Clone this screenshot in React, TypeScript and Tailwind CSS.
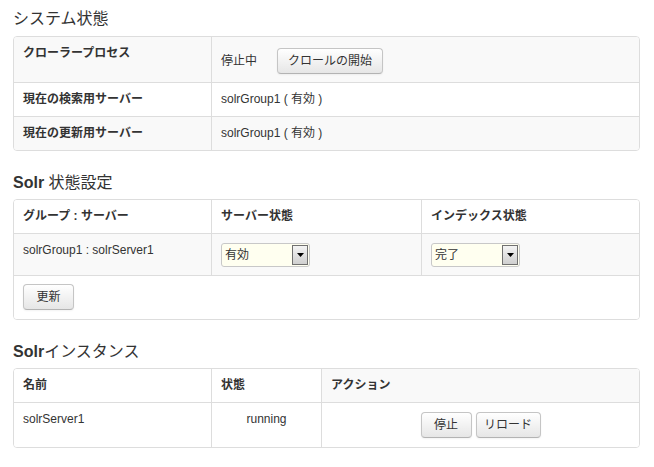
import React from "react";

const font = { fontFamily: '"Liberation Sans", "Noto Sans CJK JP", sans-serif' };

function Btn({ children, w }: { children: React.ReactNode; w: string }) {
  return (
    <button
      className={`${w} h-[26px] shrink-0 rounded-[4px] border border-[#c5c5c5] border-b-[#b3b3b3] bg-gradient-to-b from-white to-[#e6e6e6] text-[12px] text-[#333] shadow-[inset_0_1px_0_rgba(255,255,255,0.2),0_1px_2px_rgba(0,0,0,0.05)] flex items-center justify-center`}
    >
      {children}
    </button>
  );
}

function Select({ value }: { value: string }) {
  return (
    <div className="mt-[1px] w-[89px] h-[24px] rounded-[3px] border border-[#c8c8c8] bg-[#fffff0] flex items-center justify-between pl-[3px] pr-[1px]">
      <span className="text-[12px] text-[#333] leading-none">{value}</span>
      <div className="w-[16px] h-[20px] border border-[#707070] bg-gradient-to-b from-[#f4f4f4] to-[#cfcfcf] flex items-center justify-center">
        <svg width="7" height="4" viewBox="0 0 7 4">
          <path d="M0 0 H7 L3.5 4 Z" fill="#000" />
        </svg>
      </div>
    </div>
  );
}

function Heading({ children, cls }: { children: React.ReactNode; cls: string }) {
  return <h3 className={`text-[16px] leading-[20px] text-[#333] font-normal ${cls}`}>{children}</h3>;
}

export default function App() {
  return (
    <div style={font} className="w-[654px] h-[467px] bg-white text-[#333] text-[12px] pl-[13px] pt-[9px]">
      <Heading cls="mb-[7px]">システム状態</Heading>
      <div className="w-[627px] border border-[#ddd] rounded-[4px] overflow-hidden">
        <div className="flex bg-[#f9f9f9]">
          <div className="w-[197px] px-[9px] pt-[8px] pb-[8px] leading-[17px] font-bold">クローラープロセス</div>
          <div className="flex-1 border-l border-[#ddd] px-[9px] py-[8px]">
            <div className="h-[29px] pt-[2px] flex items-center gap-[20px]">
              <span>停止中</span>
              <Btn w="w-[106px]">クロールの開始</Btn>
            </div>
          </div>
        </div>
        <div className="flex border-t border-[#ddd] bg-white">
          <div className="w-[197px] px-[9px] py-[8px] leading-[17px] font-bold">現在の検索用サーバー</div>
          <div className="flex-1 border-l border-[#ddd] px-[9px] py-[8px] leading-[17px]">solrGroup1 ( 有効 )</div>
        </div>
        <div className="flex border-t border-[#ddd] bg-[#f9f9f9]">
          <div className="w-[197px] px-[9px] py-[8px] leading-[17px] font-bold">現在の更新用サーバー</div>
          <div className="flex-1 border-l border-[#ddd] px-[9px] py-[8px] leading-[17px]">solrGroup1 ( 有効 )</div>
        </div>
      </div>

      <Heading cls="mt-[22px] mb-[6px]">
        <span className="font-bold">Solr</span> 状態設定
      </Heading>
      <div className="w-[627px] border border-[#ddd] rounded-[4px] overflow-hidden">
        <div className="flex bg-white font-bold leading-[17px]">
          <div className="w-[197px] px-[9px] py-[8px]">グループ : サーバー</div>
          <div className="w-[210px] border-l border-[#ddd] px-[9px] py-[8px]">サーバー状態</div>
          <div className="flex-1 border-l border-[#ddd] px-[9px] py-[8px]">インデックス状態</div>
        </div>
        <div className="flex border-t border-[#ddd] bg-[#f9f9f9] leading-[17px]">
          <div className="w-[197px] px-[9px] py-[8px]">solrGroup1 : solrServer1</div>
          <div className="w-[210px] border-l border-[#ddd] px-[9px] py-[8px]">
            <Select value="有効" />
          </div>
          <div className="flex-1 border-l border-[#ddd] px-[9px] py-[8px]">
            <Select value="完了" />
          </div>
        </div>
        <div className="flex border-t border-[#ddd] bg-white px-[9px] pt-[8px] pb-[9px]">
          <Btn w="w-[51px]">更新</Btn>
        </div>
      </div>

      <Heading cls="mt-[22px] mb-[6px]">
        <span className="font-bold">Solr</span>インスタンス
      </Heading>
      <div className="w-[627px] border border-[#ddd] rounded-[4px] overflow-hidden">
        <div className="flex bg-white font-bold leading-[17px]">
          <div className="w-[197px] px-[9px] py-[8px]">名前</div>
          <div className="w-[110px] border-l border-[#ddd] px-[9px] py-[8px]">状態</div>
          <div className="flex-1 border-l border-[#ddd] px-[9px] py-[8px] bg-[#f9f9f9]">アクション</div>
        </div>
        <div className="flex border-t border-[#ddd] bg-white leading-[17px]">
          <div className="w-[197px] px-[9px] py-[8px]">solrServer1</div>
          <div className="w-[110px] border-l border-[#ddd] px-[9px] py-[8px] text-center">running</div>
          <div className="flex-1 border-l border-[#ddd] px-[9px] pt-[9px] pb-[9px] flex justify-center gap-[4px]">
            <Btn w="w-[51px]">停止</Btn>
            <Btn w="w-[65px]">リロード</Btn>
          </div>
        </div>
      </div>
    </div>
  );
}
